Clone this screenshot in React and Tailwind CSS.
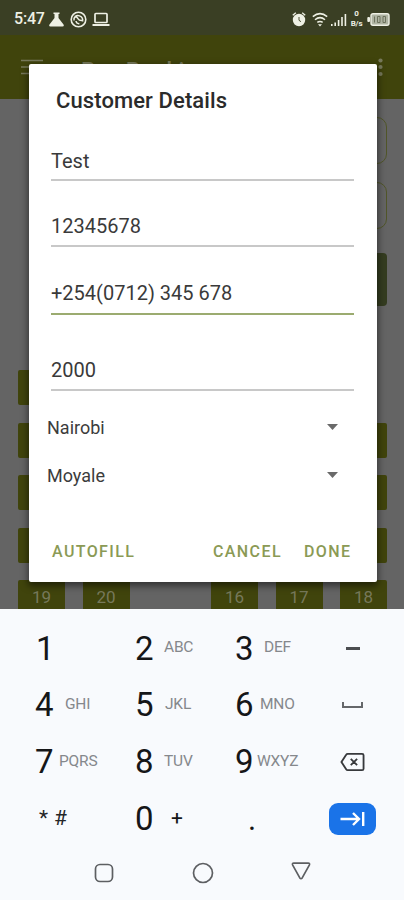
const SEAT_ROWS = [
  { left: ['5', ''], right: [] },
  { left: ['', ''], right: ['', '', ''] },
  { left: ['', ''], right: ['', '', ''] },
  { left: ['', ''], right: ['', '', ''] },
  { left: ['19', '20'], right: ['16', '17', '18'] },
];

const FIELDS = [
  { value: 'Test', box: 'h-[37px] leading-[35px]', line: 'border-[#c8c8c8]' },
  { value: '12345678', box: 'h-[37px] mt-[29px] leading-[33px]', line: 'border-[#c8c8c8]' },
  { value: '+254(0712) 345 678', box: 'h-[38px] mt-[30px] leading-[33px]', line: 'border-[#9bab70]' },
  { value: '2000', box: 'h-[37px] mt-[39px] leading-[33px]', line: 'border-[#c8c8c8]' },
];

function StatusBar() {
  return (
    <div className="flex h-[35px] shrink-0 items-center justify-between bg-[#3a3f24] pt-[3px] pr-[14px] pl-[14px] text-[#eef0e4]">
      <div className="flex items-center">
        <span className="w-[31px] text-[16px] leading-none font-medium tracking-[-0.2px]">5:47</span>
        <svg className="ml-[4px]" width="15" height="15" viewBox="0 0 15 15" fill="currentColor">
          <path d="M4.5 0.5h6v1.6h-1v4l5 6.4q1 2-1 2h-12q-2 0-1-2l5-6.4v-4h-1z" />
        </svg>
        <svg className="ml-[6px]" width="17" height="17" viewBox="0 0 17 17" fill="none" stroke="currentColor">
          <circle cx="8.5" cy="8.5" r="7.3" strokeWidth="1.6" />
          <path d="M4 9.5c-0.5-3.5 2.5-5.8 5.5-4.6 2.3 0.9 3.6 3 3 5.6M4.6 5.4c2 0 3 1.2 3.6 2.5 0.8 1.6 2.2 1.8 4 1.6M6 10c0.3 1.8 1.6 2.8 3.4 2.6" strokeWidth="1.5" />
        </svg>
        <svg className="ml-[5px]" width="18" height="15" viewBox="0 0 18 15" fill="none" stroke="currentColor" strokeWidth="1.7">
          <rect x="3" y="1.5" width="12" height="9" rx="0.8" />
          <path d="M0.5 13h17" strokeWidth="2" />
        </svg>
      </div>
      <div className="flex items-center">
        <svg width="14" height="15" viewBox="0 0 14 15">
          <circle cx="7" cy="8" r="6.2" fill="currentColor" />
          <path d="M0.8 3.2l3-2.4M13.2 3.2l-3-2.4" stroke="currentColor" strokeWidth="1.4" />
          <path d="M7 5v3.3l2 1.4" stroke="#3a3f24" strokeWidth="0.9" fill="none" />
        </svg>
        <svg className="ml-[6px]" width="16" height="15" viewBox="0 0 16 15" fill="none" stroke="currentColor" strokeWidth="1.5">
          <path d="M0.8 4.6q7.2-6 14.4 0M3 7.7q5-4.2 10 0M5.3 10.4q2.7-2 5.4 0" />
          <path d="M6 12.2h4l-2 2.4z" fill="currentColor" stroke="none" />
        </svg>
        <svg className="ml-[3px]" width="16" height="13" viewBox="0 0 16 13" fill="currentColor">
          <path d="M0 11h1.6v2H0zM3.4 9.5H5V13H3.4zM6.8 7h1.6v6H6.8zM10.2 4h1.6v9h-1.6zM13.6 1h1.6v12h-1.6z" />
        </svg>
        <div className="ml-[2px] flex w-[15px] flex-col items-center text-[8px] leading-[10px] font-bold">
          <span>0</span>
          <span className="tracking-[-0.2px]">B/s</span>
        </div>
        <svg className="ml-[3px]" width="23" height="13" viewBox="0 0 23 13">
          <rect x="4" y="0.7" width="18" height="11.6" rx="2" fill="#aeb3a2" stroke="currentColor" strokeWidth="1.4" />
          <rect x="0.3" y="4" width="2.7" height="5" rx="1" fill="currentColor" />
          <path d="M7.5 3.5v6M10.5 3.5h2.5v6h-2.5zM16 3.5h2.5v6H16z" stroke="#6d725d" fill="none" />
        </svg>
      </div>
    </div>
  );
}

function AppBar() {
  return (
    <div className="flex h-[64px] shrink-0 items-center bg-[#40440c] pr-[21px] pl-[21px] text-[#77795b]">
      <svg width="22" height="16" viewBox="0 0 22 16" stroke="currentColor" strokeWidth="1.6">
        <path d="M0 1.5h22M0 8h22M0 14.5h22" />
      </svg>
      <span className="ml-[38px] flex-1 pt-[8px] text-[23px] leading-none font-medium">Bus Booking</span>
      <svg width="5" height="20" viewBox="0 0 5 20" fill="currentColor">
        <circle cx="2.5" cy="3.5" r="2.1" />
        <circle cx="2.5" cy="10" r="2.1" />
        <circle cx="2.5" cy="17" r="2.1" />
      </svg>
    </div>
  );
}

function Seat({ label }) {
  return (
    <div className="flex h-[35px] w-[47px] items-center justify-center rounded-[2px] bg-[#40440c] text-[17px] text-[#77795b]">
      {label}
    </div>
  );
}

function BookingScreen() {
  return (
    <div className="flex h-[609px] flex-col overflow-hidden bg-[#646464]">
      <StatusBar />
      <AppBar />
      <div className="flex shrink-0 flex-col pt-[18px] pr-[17px] pl-[120px]">
        <div className="h-[47px] rounded-[10px] border border-[#515629]" />
        <div className="mt-[18px] h-[47px] rounded-[10px] border border-[#515629]" />
        <div className="mt-[24px] h-[53px] rounded-[4px] bg-[#343c20]" />
      </div>
      <div className="flex shrink-0 flex-col gap-[17.5px] pt-[64px] pr-[17px] pl-[18px]">
        {SEAT_ROWS.map((row, i) => (
          <div key={i} className="flex justify-between">
            <div className="flex gap-[17.5px]">
              {row.left.map((s, j) => <Seat key={j} label={s} />)}
            </div>
            <div className="flex gap-[17.5px]">
              {row.right.map((s, j) => <Seat key={j} label={s} />)}
            </div>
          </div>
        ))}
      </div>
    </div>
  );
}

function Spinner({ value }) {
  return (
    <div className="flex h-12 items-center justify-between pr-[39px] pl-[18px]">
      <span className="text-[18px] text-[#3c3c3c]">{value}</span>
      <svg width="11" height="6" viewBox="0 0 11 6" fill="#6a6a6a">
        <path d="M0 0h11L5.5 6z" />
      </svg>
    </div>
  );
}

function CustomerDialog() {
  return (
    <div className="absolute top-[64px] left-[29px] flex h-[518px] w-[348px] flex-col rounded-[2px] bg-white shadow-[0_3px_7px_1px_rgba(0,0,0,0.5)]">
      <h1 className="pt-[23px] pl-[27px] text-[22px] leading-[28px] font-medium tracking-[0.1px] text-[#2b2b2b]">Customer Details</h1>
      <div className="mt-[29px] flex flex-col pr-[23px] pl-[22px]">
        {FIELDS.map((f) => (
          <div key={f.value} className={`${f.box} ${f.line} border-b-2 text-[20px] text-[#3a3a3a]`}>
            {f.value}
          </div>
        ))}
      </div>
      <div className="mt-[12px]">
        <Spinner value="Nairobi" />
        <Spinner value="Moyale" />
      </div>
      <div className="mt-[43px] flex pl-[23px] text-[16px] leading-[20px] font-medium tracking-[1.4px] text-[#8b9a55]">
        <span className="w-[161px]">AUTOFILL</span>
        <span className="w-[91px]">CANCEL</span>
        <span>DONE</span>
      </div>
    </div>
  );
}

function Key({ digit, letters, gap = '' }) {
  return (
    <div className="flex items-center">
      <span className="w-[18px] text-center text-[33px] leading-none text-[#151618]">{digit}</span>
      <span className={`${gap} text-[15.5px] leading-none tracking-[-0.2px] text-[#85888c]`}>{letters}</span>
    </div>
  );
}

function Keyboard() {
  return (
    <div className="h-[291px] bg-[#f8fafd]">
      <div className="grid grid-cols-[100px_100px_94px_1fr] grid-rows-[56px_57px_57px_57px] pt-[11px] pl-[35px]">
        <div className="flex items-center pl-[1px]">
          <Key digit="1" />
        </div>
        <Key digit="2" letters="ABC" gap="ml-[11px]" />
        <Key digit="3" letters="DEF" gap="ml-[11px]" />
        <div className="flex items-center pl-[17px]">
          <div className="h-[3px] w-[14px] bg-[#4b4d50]" />
        </div>
        <Key digit="4" letters="GHI" gap="ml-[12px]" />
        <Key digit="5" letters="JKL" gap="ml-[12px]" />
        <Key digit="6" letters="MNO" gap="ml-[7px]" />
        <div className="flex items-center pl-[13px]">
          <div className="h-[6px] w-[21px] border-2 border-t-0 border-[#65676a]" />
        </div>
        <Key digit="7" letters="PQRS" gap="ml-[6px]" />
        <Key digit="8" letters="TUV" gap="ml-[11px]" />
        <Key digit="9" letters="WXYZ" gap="ml-[4px]" />
        <div className="flex items-center pl-[11px]">
          <svg width="25" height="20" viewBox="0 0 26 20" fill="none" stroke="#37393c" strokeWidth="1.9">
            <path d="M8 1.5h15q1.5 0 1.5 1.5v14q0 1.5-1.5 1.5H8q-1 0-1.6-1L1.5 10l4.9-7.5q0.6-1 1.6-1z" />
            <path d="M11.2 6.7l6.6 6.6M17.8 6.7l-6.6 6.6" />
          </svg>
        </div>
        <div className="flex items-center gap-[6px] pl-[4px] text-[21px] text-[#252628]">
          <span>*</span>
          <span>#</span>
        </div>
        <div className="flex items-center">
          <span className="w-[18px] text-center text-[33px] leading-none text-[#151618]">0</span>
          <span className="ml-[18px] text-[21px] leading-none text-[#151618]">+</span>
        </div>
        <div className="flex items-center pt-[1px] pl-[13px] text-[31px] leading-none text-[#151618]">.</div>
        <div className="flex items-center">
          <div className="flex h-[32px] w-[47px] items-center justify-center rounded-[9px] bg-[#1a73e8]">
            <svg width="25" height="16" viewBox="0 0 25 16" fill="none" stroke="#fff" strokeWidth="2.4">
              <path d="M0.5 8h18M13 2l6 6-6 6M23.2 1v14" />
            </svg>
          </div>
        </div>
      </div>
      <div className="flex items-center pt-[15px] pl-[94px] text-[#5d5f62]">
        <svg width="20" height="20" viewBox="0 0 20 20" fill="none" stroke="currentColor" strokeWidth="1.7">
          <rect x="1.5" y="1.5" width="17" height="17" rx="4.5" />
        </svg>
        <svg className="ml-[78px]" width="22" height="22" viewBox="0 0 22 22" fill="none" stroke="currentColor" strokeWidth="1.7">
          <circle cx="11" cy="11" r="9.5" />
        </svg>
        <svg className="mb-[4px] ml-[77px]" width="20" height="18" viewBox="0 0 20 18" fill="none" stroke="currentColor" strokeWidth="1.7" strokeLinejoin="round">
          <path d="M2.8 1.2h14.4q2 0 1.1 1.9l-7.1 12.8q-1.2 1.6-2.4 0L1.7 3.1q-0.9-1.9 1.1-1.9z" />
        </svg>
      </div>
    </div>
  );
}

export default function App() {
  return (
    <div className="relative h-[900px] w-[404px] overflow-hidden font-[Roboto,sans-serif]">
      <BookingScreen />
      <Keyboard />
      <CustomerDialog />
    </div>
  );
}
